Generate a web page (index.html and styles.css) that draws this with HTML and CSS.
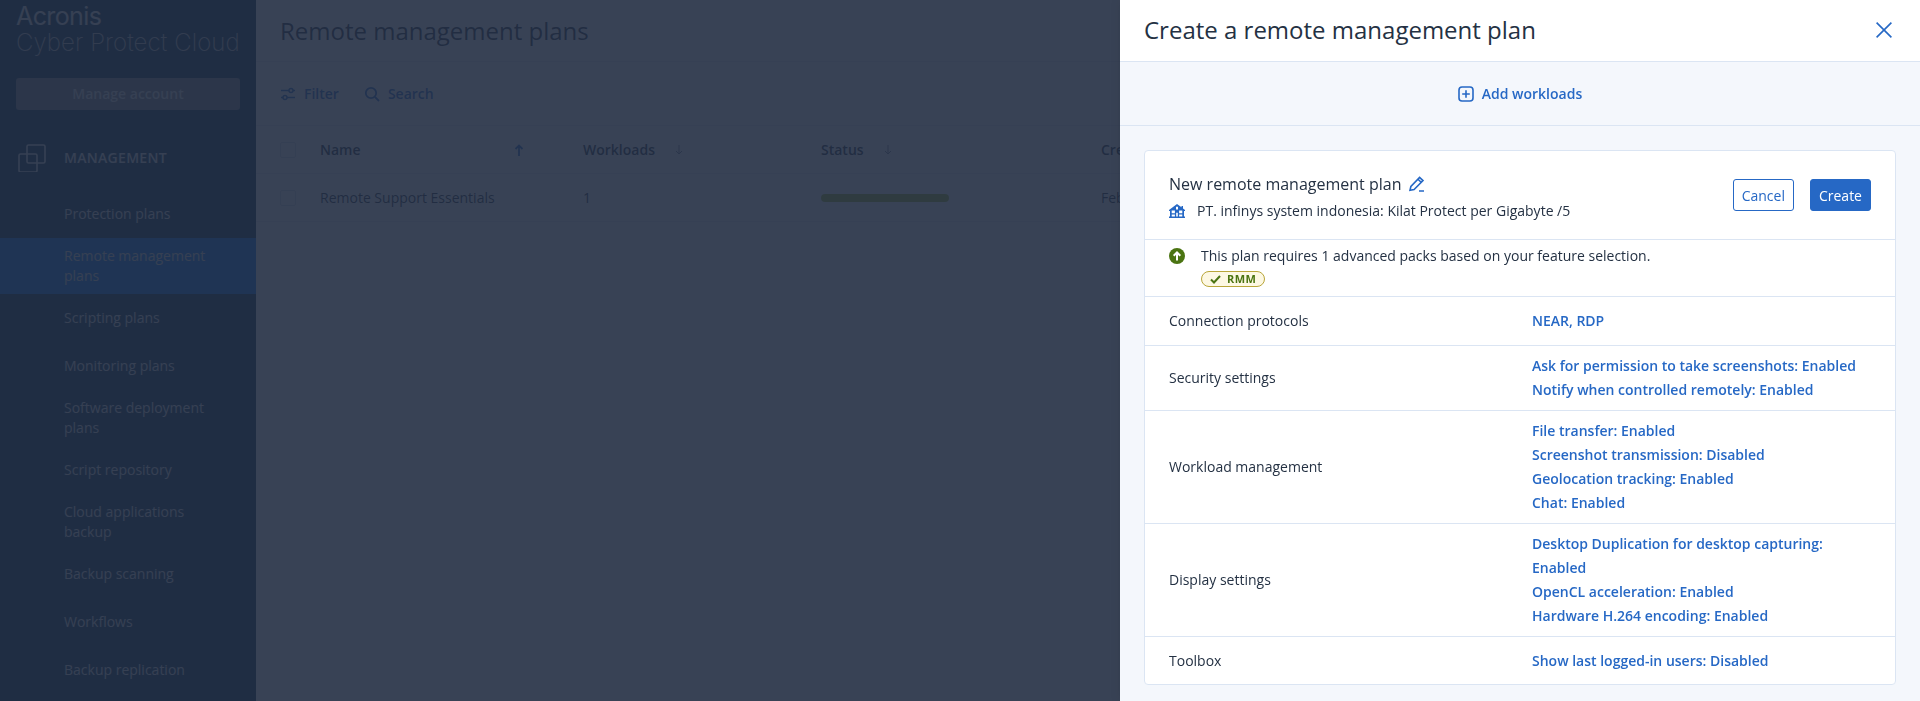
FILE: index.html
```html
<!DOCTYPE html>
<html lang="en">
<head>
    <meta charset="UTF-8">
    <meta name="viewport" content="width=device-width, initial-scale=1.0">
    <title>Create a remote management plan</title>
    <link rel="stylesheet" href="styles.css">
</head>
<body>
    <div class="app">
        <aside class="sidebar">
            <div class="logo">
                <div class="logo-name">Acronis</div>
                <div class="logo-product">Cyber Protect Cloud</div>
            </div>
            <div class="manage-wrap">
                <a href="#" class="manage-btn">Manage account</a>
            </div>
            <div class="side-section">
                <svg class="side-section-icon" width="28" height="28" viewBox="0 0 28 28" fill="none" stroke="currentColor" stroke-width="1.6">
                    <rect x="1" y="10" width="18" height="18" rx="1.5"/>
                    <rect x="9" y="1" width="18" height="18" rx="1.5"/>
                </svg>
                <span>MANAGEMENT</span>
            </div>
            <nav class="side-nav">
                <a href="#" class="side-link">Protection plans</a>
                <a href="#" class="side-link active">Remote management plans</a>
                <a href="#" class="side-link">Scripting plans</a>
                <a href="#" class="side-link">Monitoring plans</a>
                <a href="#" class="side-link">Software deployment plans</a>
                <a href="#" class="side-link">Script repository</a>
                <a href="#" class="side-link">Cloud applications backup</a>
                <a href="#" class="side-link">Backup scanning</a>
                <a href="#" class="side-link">Workflows</a>
                <a href="#" class="side-link">Backup replication</a>
            </nav>
        </aside>

        <main class="main-content">
            <div class="page-title">
                <h1>Remote management plans</h1>
            </div>
            <div class="toolbar">
                <a href="#" class="tool">
                    <svg width="16" height="16" viewBox="0 0 16 16" fill="none" stroke="currentColor" stroke-width="1.5">
                        <path d="M1 4.5h8M13 4.5h2M1 11.5h2M7 11.5h8"/>
                        <circle cx="11" cy="4.5" r="2"/>
                        <circle cx="5" cy="11.5" r="2"/>
                    </svg>
                    Filter
                </a>
                <a href="#" class="tool">
                    <svg width="16" height="16" viewBox="0 0 16 16" fill="none" stroke="currentColor" stroke-width="1.8">
                        <circle cx="7" cy="7" r="5.2"/>
                        <path d="M11 11l4 4"/>
                    </svg>
                    Search
                </a>
            </div>
            <div class="plans-row plans-head">
                <span class="check"></span>
                <span class="col-sort col-name">Name
                    <svg class="sort-on" width="10" height="12" viewBox="0 0 10 12" fill="none" stroke="currentColor" stroke-width="1.8"><path d="M5 12V2M1.5 5L5 1.5 8.5 5"/></svg>
                </span>
                <span class="col-sort">Workloads
                    <svg class="sort-off" width="8" height="10" viewBox="0 0 8 10" fill="none" stroke="currentColor" stroke-width="1"><path d="M4 0v9M1 6l3 3 3-3"/></svg>
                </span>
                <span class="col-sort">Status
                    <svg class="sort-off" width="8" height="10" viewBox="0 0 8 10" fill="none" stroke="currentColor" stroke-width="1"><path d="M4 0v9M1 6l3 3 3-3"/></svg>
                </span>
                <span>Created</span>
            </div>
            <div class="plans-row">
                <span class="check"></span>
                <span>Remote Support Essentials</span>
                <span>1</span>
                <span class="status-bar"></span>
                <span>Feb</span>
            </div>
        </main>
    </div>

    <div class="overlay"></div>

    <section class="panel">
        <header class="panel-header">
            <h2>Create a remote management plan</h2>
            <svg class="close-icon" width="16" height="16" viewBox="0 0 16 16" fill="none" stroke="currentColor" stroke-width="1.6"><path d="M.6.6l14.8 14.8M15.4.6L.6 15.4"/></svg>
        </header>
        <div class="panel-add">
            <a href="#" class="add-link">
                <svg width="16" height="16" viewBox="0 0 16 16" fill="none" stroke="currentColor" stroke-width="1.6">
                    <rect x="1" y="1" width="14" height="14" rx="3"/>
                    <path d="M8 4.2v7.6M4.2 8h7.6"/>
                </svg>
                Add workloads
            </a>
        </div>
        <div class="panel-body">
            <div class="plan-card">
                <div class="plan-head">
                    <div class="plan-info">
                        <div class="plan-name">
                            New remote management plan
                            <svg class="blue-icon" width="16" height="16" viewBox="0 0 16 16" fill="none" stroke="currentColor" stroke-width="1.6">
                                <path d="M1 14.2l.9-3.800L10.600 1.400l3.400 3.200-8.900 9-4.100.6zM9 3.200l3.400 3.300M10 15h5"/>
                            </svg>
                        </div>
                        <div class="plan-tenant">
                            <svg class="blue-icon" width="16" height="14" viewBox="0 0 16 14">
                                <path fill="currentColor" fill-rule="evenodd" d="M8 0l4.500 3.300V2H14v2.400L16 6v1h-1v5.500h1V14H0v-1.500h1V7H0V6zM7 2.800v2.600h2V2.800zM2.700 6.500v2.800h3.200V6.500zM10.100 6.500v2.800h3.200V6.500zM2.700 10.500v2h3.200v-2zM10.100 10.500v2h3.200v-2zM7.200 8.800v3.700h1.600V8.800z"/>
                            </svg>
                            PT. infinys system indonesia: Kilat Protect per Gigabyte /5
                        </div>
                    </div>
                    <div class="plan-actions">
                        <button class="btn btn-outline">Cancel</button>
                        <button class="btn btn-primary">Create</button>
                    </div>
                </div>
                <div class="plan-notice">
                    <svg class="notice-icon" width="16" height="16" viewBox="0 0 16 16">
                        <circle cx="8" cy="8" r="8" fill="#4b7412"/>
                        <path d="M8 12.500V4.500M4.700 7.800L8 4.500l3.300 3.300" fill="none" stroke="#fff" stroke-width="2"/>
                    </svg>
                    <div>
                        <div class="notice-text">This plan requires 1 advanced packs based on your feature selection.</div>
                        <span class="pack-badge">
                            <svg width="11" height="9" viewBox="0 0 11 9" fill="none" stroke="currentColor" stroke-width="2"><path d="M1 4.500l3 3L10 1"/></svg>
                            RMM
                        </span>
                    </div>
                </div>
                <div class="plan-row">
                    <div class="plan-label">Connection protocols</div>
                    <div class="plan-values"><a href="#">NEAR, RDP</a></div>
                </div>
                <div class="plan-row">
                    <div class="plan-label">Security settings</div>
                    <div class="plan-values">
                        <a href="#">Ask for permission to take screenshots: Enabled</a>
                        <a href="#">Notify when controlled remotely: Enabled</a>
                    </div>
                </div>
                <div class="plan-row">
                    <div class="plan-label">Workload management</div>
                    <div class="plan-values">
                        <a href="#">File transfer: Enabled</a>
                        <a href="#">Screenshot transmission: Disabled</a>
                        <a href="#">Geolocation tracking: Enabled</a>
                        <a href="#">Chat: Enabled</a>
                    </div>
                </div>
                <div class="plan-row">
                    <div class="plan-label">Display settings</div>
                    <div class="plan-values">
                        <a href="#">Desktop Duplication for desktop capturing: Enabled</a>
                        <a href="#">OpenCL acceleration: Enabled</a>
                        <a href="#">Hardware H.264 encoding: Enabled</a>
                    </div>
                </div>
                <div class="plan-row">
                    <div class="plan-label">Toolbox</div>
                    <div class="plan-values"><a href="#">Show last logged-in users: Disabled</a></div>
                </div>
            </div>
        </div>
    </section>
</body>
</html>
```

FILE: styles.css
```css
* {
    margin: 0;
    padding: 0;
    box-sizing: border-box;
}

html, body {
    height: 100%;
    overflow: hidden;
}

body {
    font-family: "Open Sans", "Noto Sans", sans-serif;
    font-size: 14px;
    line-height: 20px;
    color: #243143;
    background: #fff;
}

a {
    color: inherit;
    text-decoration: none;
}

.app {
    display: flex;
    height: 100%;
}

/* left menu */
.sidebar {
    width: 256px;
    flex-shrink: 0;
    background: #042e4d;
    color: #e4e4e4;
    overflow: hidden;
}

.logo {
    height: 78px;
    padding: 3px 16px 0;
}

.logo-name {
    font-family: Inter, sans-serif;
    font-size: 25px;
    line-height: 27px;
    letter-spacing: -0.6px;
}

.logo-product {
    font-family: Inter, sans-serif;
    font-weight: 200;
    font-size: 24px;
    line-height: 26px;
    letter-spacing: 0.1px;
    white-space: nowrap;
    color: #c4c4c4;
}

.manage-wrap {
    padding: 0 16px;
}

.manage-btn {
    display: block;
    height: 32px;
    line-height: 32px;
    text-align: center;
    font-weight: 600;
    border-radius: 3px;
    background: #80828a;
}

.side-section {
    display: flex;
    align-items: center;
    height: 80px;
    padding: 16px 0 0 18px;
    font-weight: 600;
    letter-spacing: 0.3px;
}

.side-section span {
    margin-left: 18px;
}

.side-nav {
    display: flex;
    flex-direction: column;
}

.side-link {
    display: flex;
    align-items: center;
    min-height: 48px;
    padding: 8px 24px 8px 64px;
}

.side-link.active {
    background: #0474ed;
}

/* page behind the panel */
.main-content {
    flex: 1;
    min-width: 0;
}

.page-title {
    height: 62px;
    padding: 0 24px;
    display: flex;
    align-items: center;
    border-bottom: 1px solid #e6ebf2;
}

.page-title h1 {
    font-size: 24px;
    font-weight: 400;
    line-height: 32px;
    white-space: nowrap;
}

.toolbar {
    height: 64px;
    padding: 0 24px;
    display: flex;
    align-items: center;
    gap: 25px;
    border-bottom: 1px solid #e6ebf2;
}

.tool {
    display: flex;
    align-items: center;
    gap: 8px;
    font-weight: 600;
    color: #2668c5;
}

.plans-row {
    display: grid;
    grid-template-columns: 40px 263px 238px 280px 200px;
    align-items: center;
    height: 48px;
    padding-left: 24px;
    border-bottom: 1px solid #e6ebf2;
    white-space: nowrap;
}

.plans-head {
    font-weight: 600;
}

.check {
    width: 16px;
    height: 16px;
    border: 1px solid #d3dae3;
    border-radius: 2px;
    background: #fff;
}

.col-sort {
    display: flex;
    align-items: center;
    gap: 20px;
}

.col-name {
    justify-content: space-between;
    padding-right: 59px;
}

.sort-on {
    color: #2668c5;
}

.sort-off {
    color: #7b8794;
}

.status-bar {
    width: 128px;
    height: 8px;
    border-radius: 4px;
    background: #a0b830;
}

.overlay {
    position: fixed;
    top: 0;
    left: 0;
    right: 0;
    bottom: 0;
    background: rgba(34, 46, 67, 0.9);
}

/* slide-out panel */
.panel {
    position: fixed;
    top: 0;
    right: 0;
    bottom: 0;
    width: 800px;
    display: flex;
    flex-direction: column;
    background: #f4f7fc;
    box-shadow: 0 0 10px rgba(0, 0, 0, 0.1);
}

.panel-header {
    height: 62px;
    flex-shrink: 0;
    padding: 0 28px 1px 24px;
    display: flex;
    justify-content: space-between;
    align-items: center;
    background: #fff;
    border-bottom: 1px solid #dbe5f3;
}

.panel-header h2 {
    font-size: 24px;
    font-weight: 400;
    line-height: 32px;
}

.close-icon,
.blue-icon {
    color: #2668c5;
}

.panel-add {
    height: 64px;
    flex-shrink: 0;
    display: flex;
    justify-content: center;
    align-items: center;
    border-bottom: 1px solid #dbe5f3;
}

.add-link {
    display: flex;
    align-items: center;
    gap: 8px;
    font-weight: 600;
    color: #2668c5;
}

.panel-body {
    padding: 24px;
}

.plan-card {
    background: #fff;
    border: 1px solid #dbe5f3;
    border-radius: 4px;
}

.plan-head {
    height: 89px;
    padding: 0 24px;
    display: flex;
    justify-content: space-between;
    align-items: center;
    border-bottom: 1px solid #dbe5f3;
}

.plan-info {
    padding-top: 3px;
}

.plan-name {
    display: flex;
    align-items: center;
    gap: 8px;
    font-size: 16px;
    line-height: 24px;
    margin-bottom: 5px;
}

.plan-tenant {
    display: flex;
    align-items: center;
    gap: 12px;
}

.plan-actions {
    display: flex;
    gap: 16px;
}

.btn {
    font-family: inherit;
    font-size: 14px;
    font-weight: 500;
    height: 32px;
    padding: 0 8px;
    border-radius: 3px;
}

.btn-outline {
    background: #fff;
    border: 1px solid #2668c5;
    color: #2668c5;
}

.btn-primary {
    background: #2668c5;
    border: 1px solid #2668c5;
    color: #fff;
}

.plan-notice {
    height: 57px;
    padding: 6px 24px 0;
    display: flex;
    gap: 16px;
    border-bottom: 1px solid #dbe5f3;
}

.notice-icon {
    margin-top: 2px;
    flex-shrink: 0;
}

.pack-badge {
    display: inline-flex;
    align-items: center;
    gap: 6px;
    height: 16px;
    padding: 0 8px;
    margin-top: 5px;
    font-size: 11px;
    font-weight: 700;
    letter-spacing: 0.4px;
    color: #4b7412;
    background: #fdf8e3;
    border: 1px solid #b9a63a;
    border-radius: 8px;
}

.plan-row {
    display: grid;
    grid-template-columns: 363px 1fr;
    align-items: center;
    min-height: 49px;
    padding: 8px 24px;
    border-bottom: 1px solid #dbe5f3;
}

.plan-row:last-child {
    border-bottom: 0;
    min-height: 47px;
}

.plan-values {
    display: flex;
    flex-direction: column;
    line-height: 24px;
    font-weight: 600;
    color: #2668c5;
}
```
